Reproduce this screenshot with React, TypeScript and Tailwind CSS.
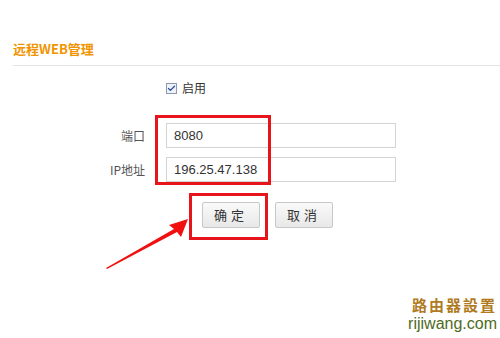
import { Check } from 'lucide-react';

const cjk = '"Noto Sans CJK SC", "Liberation Sans", sans-serif';

export default function App() {
  return (
    <div
      className="relative h-[338px] w-[500px] overflow-hidden bg-white"
      style={{ fontFamily: cjk }}
    >
      {/* header */}
      <div className="ml-[13px] border-b border-[#e3e3e3] pt-[40px] pb-[7px]">
        <h2 className="text-[13px] leading-[18px] font-bold text-[#f29400]">远程WEB管理</h2>
      </div>

      {/* enable */}
      <div className="mt-[16px] flex items-center pl-[166px]">
        <span className="flex h-[11px] w-[11px] items-center justify-center border border-[#8a9bb0] bg-[#eef2f8]">
          <Check className="h-[9px] w-[9px] text-[#2b4f9c]" strokeWidth={3.5} />
        </span>
        <span className="ml-[5px] text-[12px] leading-[12px] text-[#333]">启用</span>
      </div>

      {/* fields */}
      <div className="mt-[29px] flex flex-col gap-[9px]">
        <div className="flex items-center">
          <label className="w-[146px] pr-[1px] text-right text-[12px] text-[#555]">端口</label>
          <div className="ml-[20px] flex h-[25px] w-[230px] items-center border border-[#d4d4d4] px-[7px] text-[13px] text-[#333] [font-family:'Liberation_Sans',sans-serif]">
            8080
          </div>
        </div>
        <div className="flex items-center">
          <label className="w-[146px] pr-[1px] text-right text-[12px] text-[#555]">IP地址</label>
          <div className="ml-[20px] flex h-[25px] w-[230px] items-center border border-[#d4d4d4] px-[7px] text-[13px] text-[#333] [font-family:'Liberation_Sans',sans-serif]">
            196.25.47.138
          </div>
        </div>
      </div>

      {/* buttons */}
      <div className="mt-[20px] flex gap-[15px] pl-[202px]">
        <button className="h-[26px] w-[58px] rounded-[2px] border border-[#c8c8c8] bg-gradient-to-b from-[#fafafa] to-[#e8e8e8] text-[13px] tracking-[4px] text-[#333]">
          确定
        </button>
        <button className="h-[26px] w-[58px] rounded-[2px] border border-[#c8c8c8] bg-gradient-to-b from-[#fafafa] to-[#e8e8e8] text-[13px] tracking-[4px] text-[#333]">
          取消
        </button>
      </div>

      {/* annotations */}
      <div className="absolute top-[115px] left-[155px] h-[70px] w-[116px] border-[3px] border-[#e8141b]" />
      <div className="absolute top-[193px] left-[189px] h-[47px] w-[79px] border-[3px] border-[#e8141b]" />
      <svg className="absolute top-0 left-0" width="500" height="338" viewBox="0 0 500 338">
        <polygon points="106,268 174,229 169,225 188,219 181,237 177,232 107,269" fill="#f01010" />
      </svg>

      {/* watermark */}
      <div className="absolute right-[3px] bottom-[5px] flex flex-col items-end gap-[1px]">
        <span className="text-[15px] leading-[18px] font-bold tracking-[2px] text-[#b07a1e]">路由器設置</span>
        <span className="text-[16px] leading-[18px] text-[#4f6b22] [font-family:'Liberation_Sans',sans-serif]">rijiwang.com</span>
      </div>
    </div>
  );
}
